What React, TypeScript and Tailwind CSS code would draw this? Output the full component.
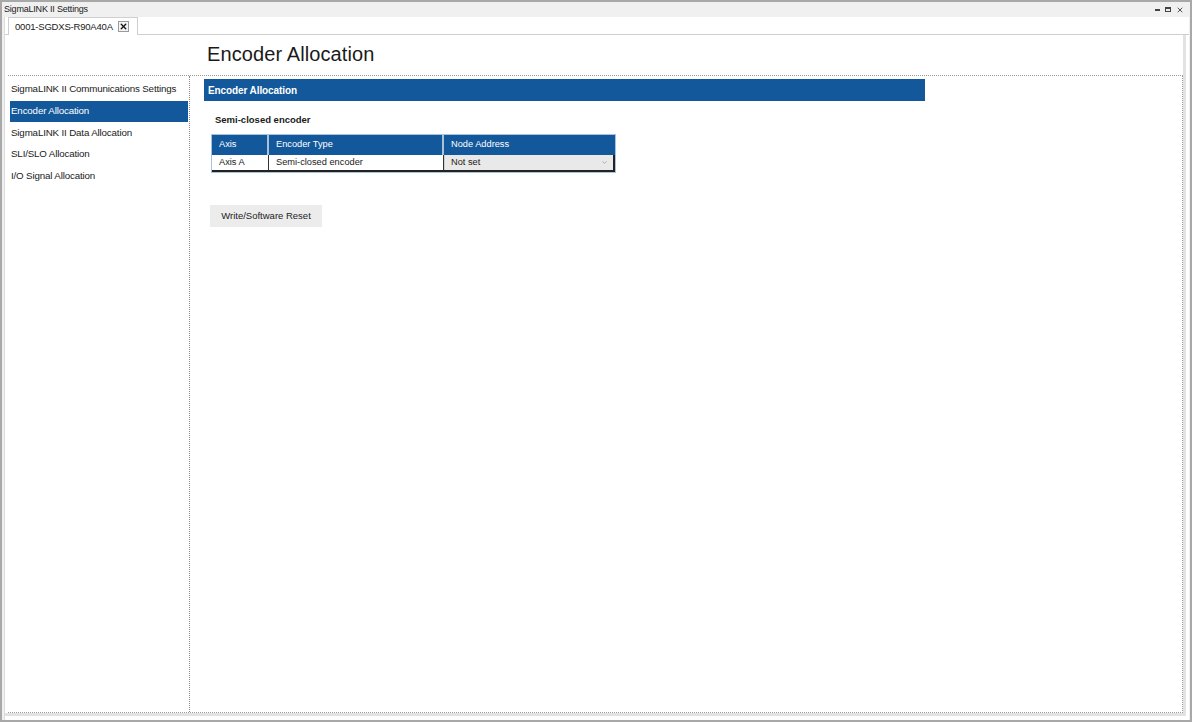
import { X, ChevronDown } from 'lucide-react'

const navItems = [
  'SigmaLINK II Communications Settings',
  'Encoder Allocation',
  'SigmaLINK II Data Allocation',
  'SLI/SLO Allocation',
  'I/O Signal Allocation',
]

export default function App() {
  const font = { fontFamily: '"Liberation Sans", Arial, sans-serif' }
  return (
    <div
      className="w-[1192px] h-[722px] bg-[#f0f0f0] border-2 border-[#a8a8a8] flex flex-col text-[#1a1a1a]"
      style={font}
    >
      {/* Title bar */}
      <div className="h-[15px] flex items-center justify-between pl-[2px] pr-[6px]">
        <span className="text-[9px] leading-none tracking-[-0.2px]">SigmaLINK II Settings</span>
        <div className="flex items-center gap-[5px] text-[#333]">
          <span className="w-[5px] h-[2px] bg-[#444]" />
          <span className="w-[6px] h-[5px] border border-t-2 border-[#444]" />
          <X size={8} strokeWidth={2.5} />
        </div>
      </div>

      {/* Tab strip + document */}
      <div className="flex-1 flex flex-col ml-[2px] mr-[1px] bg-white border-l border-[#dcdcdc]">
        <div className="h-[18px] flex items-end bg-white border-b border-[#cfcfcf] pl-[3px]">
          <div className="h-[18px] w-[130px] border-t border-l border-r border-[#cfcfcf] bg-white flex items-center pl-[6px] gap-[5px] -mb-px">
            <span className="text-[9.5px] leading-none tracking-[-0.2px]">0001-SGDXS-R90A40A</span>
            <span className="w-[11px] h-[11px] border border-[#9a9a9a] bg-[#f4f4f4] flex items-center justify-center">
              <X size={9} strokeWidth={3.5} className="text-[#111]" />
            </span>
          </div>
        </div>

        <div className="flex-1 flex flex-col mr-[3px] border-r-[3px] border-[#e2e2e2] mb-[4px] border-b-[3px]">
          {/* Page header */}
          <div className="h-[40px] flex items-center pl-[202px] pb-[3px]">
            <h1 className="text-[20px] leading-none tracking-[0.1px]">Encoder Allocation</h1>
          </div>

          <div className="flex-1 flex border-t border-dotted border-[#9a9a9a] ml-[3px] border-b border-r">
            {/* Nav */}
            <div className="w-[182px] border-r border-dotted border-[#8a8a8a] pt-[3px] pl-[2px] pr-[1px] bg-white">
              {navItems.map((item, i) => (
                <div
                  key={item}
                  className={`h-[21.6px] flex items-center pl-[1px] text-[9.75px] tracking-[-0.15px] ${
                    i === 1 ? 'bg-[#13589b] text-white' : 'text-[#1a1a1a]'
                  }`}
                >
                  {item}
                </div>
              ))}
            </div>

            {/* Content */}
            <div className="flex-1 pt-[3px] pl-[14px]">
              <div className="w-[721px] h-[22px] bg-[#13589b] flex items-center pl-[4px] text-white text-[10px] font-bold tracking-[-0.1px]">
                Encoder Allocation
              </div>
              <div className="pl-[11px] pt-[12px] text-[9.5px] font-bold">Semi-closed encoder</div>

              <div className="ml-[7px] mt-[7px] w-[405px] border border-[#a9c2dc]">
                <div className="flex h-[20px] bg-[#13589b] text-white text-[9.25px]">
                  <div className="w-[57px] border-r-2 border-[#a9c2dc] flex items-center pl-[7px]">Axis</div>
                  <div className="w-[175px] border-r-2 border-[#a9c2dc] flex items-center pl-[7px]">Encoder Type</div>
                  <div className="flex-1 flex items-center pl-[7px]">Node Address</div>
                </div>
                <div className="flex h-[17px] text-[9.25px] border-b-2 border-r-2 border-[#222]">
                  <div className="w-[57px] border-r border-[#333] flex items-center pl-[7px]">Axis A</div>
                  <div className="w-[175px] border-r border-[#333] flex items-center pl-[7px]">Semi-closed encoder</div>
                  <div className="flex-1 flex items-center justify-between pl-[6px] pr-[5px] bg-[#e9e9e9] border-l border-[#cfcfcf]">
                    <span>Not set</span>
                    <ChevronDown size={7} strokeWidth={2} className="text-[#888]" />
                  </div>
                </div>
              </div>

              <button className="ml-[6px] mt-[32px] w-[112px] h-[22px] bg-[#ececec] text-[9.5px] text-[#222] flex items-center justify-center">
                Write/Software Reset
              </button>
            </div>
          </div>
        </div>
      </div>
    </div>
  )
}
